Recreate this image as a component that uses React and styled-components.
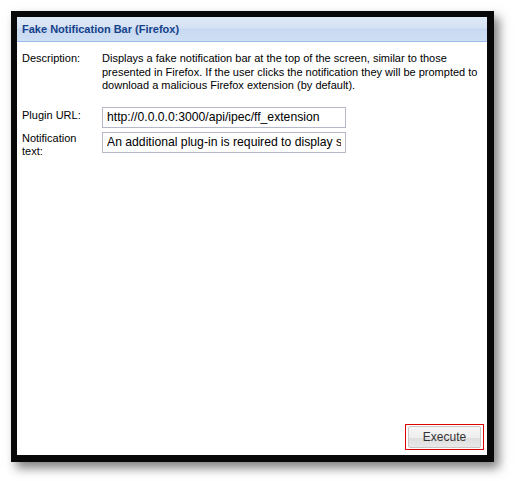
import React from "react";
import styled, { createGlobalStyle } from "styled-components";

const Global = createGlobalStyle`
  html, body { margin: 0; padding: 0; background: #ffffff; }
  body { font-family: "Liberation Sans", Arial, sans-serif; }
`;

const Page = styled.div`
  padding: 11px 0 0 11px;
  width: 515px;
  height: 481px;
  box-sizing: border-box;
`;

const Frame = styled.div`
  width: 470px;
  height: 438px;
  border-style: solid;
  border-color: #080808;
  border-width: 6px 7px 7px 6px;
  background: #ffffff;
  box-shadow: 5px 6px 10px rgba(0, 0, 0, 0.5);
  display: flex;
  flex-direction: column;
`;

const Header = styled.div`
  height: 24px;
  border-bottom: 1px solid #99bbe8;
  background: linear-gradient(#dfe9f7 0%, #d6e3f4 45%, #c7d9f1 50%, #cfdff4 100%);
  display: flex;
  align-items: center;
  padding-left: 5px;
  font-size: 11px;
  font-weight: bold;
  color: #15428b;
`;

const Body = styled.div`
  flex: 1;
  display: flex;
  flex-direction: column;
  padding: 10px 3px 5px 5px;
`;

const Row = styled.div`
  display: grid;
  grid-template-columns: 80px 1fr;
  align-items: start;
  margin-bottom: ${(p) => p.$gap || 0}px;
`;

const Label = styled.div`
  font-size: 11px;
  line-height: 13px;
  color: #000;
  padding-top: ${(p) => p.$pt || 0}px;
  width: 66px;
`;

const Text = styled.div`
  font-size: 11px;
  line-height: 13.5px;
  color: #000;
  padding-right: 5px;
`;

const Input = styled.input`
  width: 244px;
  height: 21px;
  box-sizing: border-box;
  border: 1px solid #b5b8c8;
  padding: 0 4px;
  font-family: "Liberation Sans", Arial, sans-serif;
  font-size: 12.2px;
  color: #000;
  background: #fff;
  outline: none;
`;

const Footer = styled.div`
  margin-top: auto;
  display: flex;
  justify-content: flex-end;
`;

const Highlight = styled.div`
  border: 1px solid #e00000;
  padding: 1px 2px;
  display: flex;
`;

const Button = styled.button`
  width: 73px;
  height: 22px;
  border: 1px solid #c8c8c8;
  border-radius: 2px;
  background: linear-gradient(#f6f6f6 0%, #eeeeee 55%, #dedede 56%, #e8e8e8 100%);
  font-family: "Liberation Sans", Arial, sans-serif;
  font-size: 12px;
  color: #333;
  padding: 0;
  margin: 0;
`;

export default function App() {
  return (
    <>
      <Global />
      <Page>
        <Frame>
          <Header>Fake Notification Bar (Firefox)</Header>
          <Body>
            <Row $gap={14}>
              <Label>Description:</Label>
              <Text>
                Displays a fake notification bar at the top of the screen, similar to those
                presented in Firefox. If the user clicks the notification they will be prompted to
                download a malicious Firefox extension (by default).
              </Text>
            </Row>
            <Row $gap={4}>
              <Label $pt={2}>Plugin URL:</Label>
              <Input readOnly value="http://0.0.0.0:3000/api/ipec/ff_extension" />
            </Row>
            <Row>
              <Label $pt={0}>Notification text:</Label>
              <Input readOnly value="An additional plug-in is required to display some elements on this page." />
            </Row>
            <Footer>
              <Highlight>
                <Button>Execute</Button>
              </Highlight>
            </Footer>
          </Body>
        </Frame>
      </Page>
    </>
  );
}
